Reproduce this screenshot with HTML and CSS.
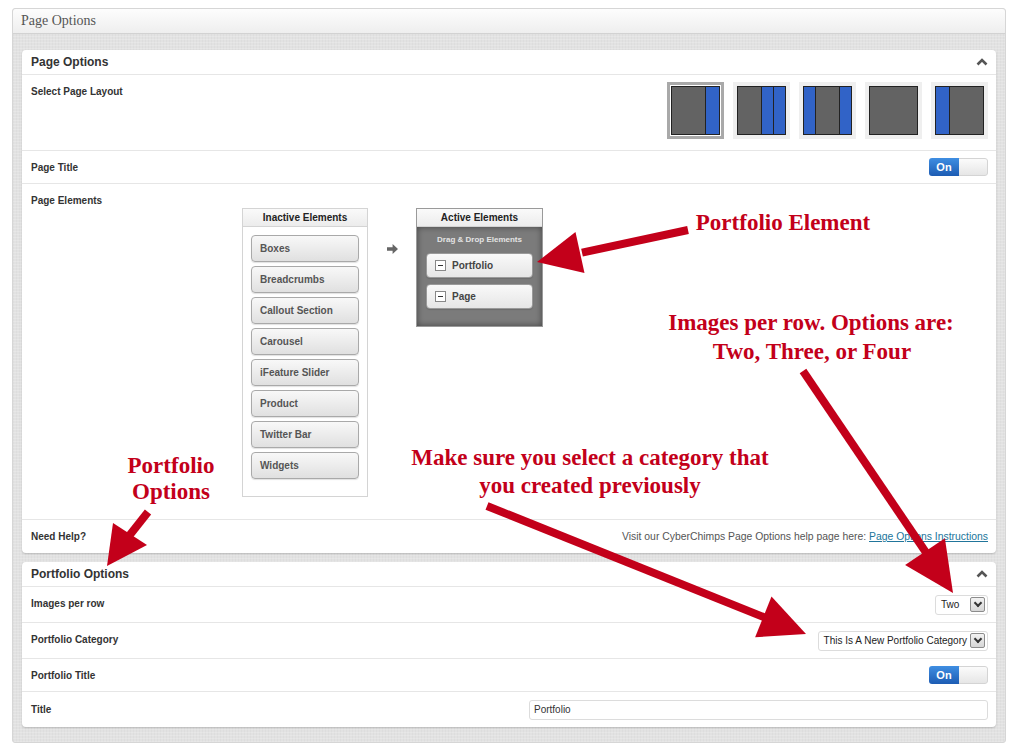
FILE: index.html
```html
<!DOCTYPE html>
<html lang="en">
<head>
    <meta charset="UTF-8">
    <title>Page Options</title>
    <meta name="viewport" content="width=device-width, initial-scale=1.0">
    <link rel="stylesheet" href="styles.css">
</head>
<body>

<div class="metabox">
    <div class="metabox-title">Page Options</div>
    <div class="metabox-inside">

        <!-- page options -->
        <div class="panel">
            <div class="panel-head">
                <h3>Page Options</h3>
                <svg class="caret" width="12" height="8" viewBox="0 0 12 8"><polyline points="1.5,6.5 6,2 10.5,6.5"/></svg>
            </div>

            <div class="opt opt-layout">
                <span class="label">Select Page Layout</span>
                <div class="layouts">
                    <div class="thumb selected"><div class="screen"><div class="main"></div><div class="side right"></div></div></div>
                    <div class="thumb"><div class="screen"><div class="main"></div><div class="side narrow right"></div><div class="side narrow right"></div></div></div>
                    <div class="thumb"><div class="screen"><div class="side narrow left"></div><div class="main"></div><div class="side narrow right"></div></div></div>
                    <div class="thumb"><div class="screen"><div class="main"></div></div></div>
                    <div class="thumb"><div class="screen"><div class="side left"></div><div class="main"></div></div></div>
                </div>
            </div>

            <div class="opt">
                <span class="label">Page Title</span>
                <span class="toggle"><span class="on">On</span><span class="off"></span></span>
            </div>

            <div class="opt opt-elements">
                <span class="label">Page Elements</span>
                <div class="dnd">
                    <div class="dnd-box">
                        <div class="dnd-head">Inactive Elements</div>
                        <ul class="dnd-list">
                            <li>Boxes</li>
                            <li>Breadcrumbs</li>
                            <li>Callout Section</li>
                            <li>Carousel</li>
                            <li>iFeature Slider</li>
                            <li>Product</li>
                            <li>Twitter Bar</li>
                            <li>Widgets</li>
                        </ul>
                    </div>
                    <svg class="dnd-arrow" width="11" height="10" viewBox="0 0 11 10"><path d="M0 3.3h5.6V0L11 5 5.6 10V6.7H0z"/></svg>
                    <div class="dnd-box dnd-active">
                        <div class="dnd-head">Active Elements</div>
                        <div class="dnd-drop">
                            <p>Drag &amp; Drop Elements</p>
                            <ul class="dnd-list">
                                <li><span class="minus"></span>Portfolio</li>
                                <li><span class="minus"></span>Page</li>
                            </ul>
                        </div>
                    </div>
                </div>
            </div>

            <div class="opt">
                <span class="label">Need Help?</span>
                <span class="help">Visit our CyberChimps Page Options help page here: <a href="#">Page Options Instructions</a></span>
            </div>
        </div>

        <!-- portfolio options -->
        <div class="panel">
            <div class="panel-head">
                <h3>Portfolio Options</h3>
                <svg class="caret" width="12" height="8" viewBox="0 0 12 8"><polyline points="1.5,6.5 6,2 10.5,6.5"/></svg>
            </div>

            <div class="opt opt-tall">
                <span class="label">Images per row</span>
                <span class="select select-sm"><span class="value">Two</span><span class="drop"></span></span>
            </div>

            <div class="opt opt-tall">
                <span class="label">Portfolio Category</span>
                <span class="select"><span class="value">This Is A New Portfolio Category</span><span class="drop"></span></span>
            </div>

            <div class="opt">
                <span class="label">Portfolio Title</span>
                <span class="toggle"><span class="on">On</span><span class="off"></span></span>
            </div>

            <div class="opt opt-title">
                <span class="label">Title</span>
                <input type="text" class="text-input" value="Portfolio">
            </div>
        </div>

    </div>
</div>

<!-- red callouts drawn over the form -->
<svg class="notes" width="1024" height="754" viewBox="0 0 1024 754">
    <g class="note-text">
        <text x="783" y="230">Portfolio Element</text>
        <text x="811" y="330">Images per row. Options are:</text>
        <text x="812" y="359">Two, Three, or Four</text>
        <text x="590" y="465">Make sure you select a category that</text>
        <text x="590" y="493">you created previously</text>
        <text x="171" y="473">Portfolio</text>
        <text x="171" y="499">Options</text>
    </g>
    <g class="note-arrows">
        <line x1="688" y1="230" x2="582" y2="252.6"/>
        <polygon points="537,262 575.5,232.1 584.5,273.1"/>

        <line x1="803" y1="371" x2="927" y2="554"/>
        <polygon points="953,593 905.1,565 944.9,538.2"/>

        <line x1="487" y1="506" x2="765" y2="617.6"/>
        <polygon points="806,634 755.1,637.3 771.5,596.5"/>

        <line x1="148" y1="512" x2="129" y2="536"/>
        <polygon points="107,566 113,523 147,545"/>
    </g>
</svg>

</body>
</html>
```

FILE: styles.css
```css
body {
    margin: 0;
    font-family: "Liberation Sans", Arial, sans-serif;
    color: #333;
    background: #fff;
}

ul {
    margin: 0;
    padding: 0;
    list-style: none;
}

/* outer metabox */
.metabox {
    box-sizing: border-box;
    width: 994px;
    margin: 8px 0 0 12px;
    border: 1px solid #d6d6d6;
    border-radius: 3px;
    background-color: #e2e2e2;
    background-image:
        repeating-linear-gradient(0deg, rgba(255, 255, 255, 0.18) 0 1px, transparent 1px 3px),
        repeating-linear-gradient(90deg, rgba(0, 0, 0, 0.025) 0 1px, transparent 1px 3px);
}

.metabox-title {
    height: 24px;
    line-height: 24px;
    padding-left: 8px;
    font-family: "Liberation Serif", "Times New Roman", serif;
    font-size: 14px;
    color: #555;
    background: linear-gradient(#fdfdfd, #eeeeee);
    border-bottom: 1px solid #d2d2d2;
    border-radius: 3px 3px 0 0;
}

.metabox-inside {
    padding: 16px 9px 15px;
}

.panel {
    background: #fff;
    border-radius: 4px;
    box-shadow: 0 1px 2px rgba(0, 0, 0, 0.18);
}

.panel + .panel {
    margin-top: 9px;
}

.panel-head {
    display: flex;
    align-items: center;
    justify-content: space-between;
    height: 24px;
    padding: 0 8px 0 9px;
    border-bottom: 1px solid #e6e6e6;
}

.panel-head h3 {
    margin: 0;
    font-size: 12px;
    font-weight: bold;
    color: #333;
}

.caret {
    fill: none;
    stroke: #555;
    stroke-width: 2.6;
}

/* option rows */
.opt {
    display: flex;
    align-items: center;
    justify-content: space-between;
    min-height: 32px;
    padding: 0 8px 0 9px;
    border-bottom: 1px solid #e6e6e6;
}

.opt:last-child {
    border-bottom: none;
    min-height: 33px;
}

.opt-tall {
    min-height: 35px;
}

.opt-tall .label {
    margin-bottom: 3px;
}

.panel .opt-title {
    min-height: 35px;
}

.label {
    font-size: 10px;
    font-weight: bold;
    line-height: 13px;
    color: #333;
}

.opt-layout {
    align-items: flex-start;
    padding-top: 10px;
    padding-bottom: 11px;
}

/* layout thumbnails */
.layouts {
    display: flex;
    gap: 9px;
    margin-top: -3px;
}

.thumb {
    width: 49px;
    height: 49px;
    padding: 4px;
    background: #efefef;
}

.thumb.selected {
    padding: 1px;
    border: 3px solid #a9a9a9;
    background: #fff;
}

.screen {
    display: flex;
    height: 47px;
    border: 1px solid #222;
    background: #636363;
}

.screen .main {
    flex: 1;
}

.screen .side {
    width: 13px;
    background: #3163c7;
}

.screen .side.narrow {
    width: 11px;
}

.screen .side.right {
    border-left: 1px solid #222;
}

.screen .side.left {
    border-right: 1px solid #222;
}

/* on/off switch */
.toggle {
    display: flex;
    width: 59px;
    height: 18px;
    border-radius: 3px;
    overflow: hidden;
}

.toggle .on {
    width: 30px;
    line-height: 18px;
    text-align: center;
    font-size: 11px;
    font-weight: bold;
    color: #fff;
    background: linear-gradient(#3f8ee2, #1d5cb3);
}

.toggle .off {
    flex: 1;
    box-sizing: border-box;
    border: 1px solid #d4d4d4;
    border-left: none;
    border-radius: 0 3px 3px 0;
    background: linear-gradient(#fbfbfb, #e6e6e6);
}

/* page elements */
.opt-elements {
    display: block;
    padding-top: 10px;
    padding-bottom: 22px;
}

.opt-elements .label {
    display: block;
}

.dnd {
    display: flex;
    align-items: flex-start;
    margin: 1px 0 0 211px;
}

.dnd-box {
    box-sizing: border-box;
    width: 126px;
    border: 1px solid #d4d4d4;
    background: #fff;
}

.dnd-head {
    height: 17px;
    line-height: 17px;
    text-align: center;
    font-size: 10px;
    font-weight: bold;
    color: #222;
    background: linear-gradient(#fafafa, #ececec);
    border-bottom: 1px solid #d4d4d4;
}

.dnd-box > .dnd-list {
    padding: 8px 8px 17px;
}

.dnd-list li {
    height: 25px;
    line-height: 25px;
    padding-left: 8px;
    margin-bottom: 4px;
    font-size: 10px;
    font-weight: bold;
    color: #555;
    border: 1px solid #a9a9a9;
    border-radius: 4px;
    background: linear-gradient(#f8f8f8, #e0e0e0);
    box-shadow: 0 1px 1px rgba(0, 0, 0, 0.12);
}

.dnd-list li:last-child {
    margin-bottom: 0;
}

.dnd-arrow {
    margin: 36px 18px 0 19px;
    fill: #666;
}

.dnd-active {
    width: 127px;
    border-color: #9a9a9a;
}

.dnd-drop {
    padding: 8px 9px 17px;
    background: #7b7b7b;
    box-shadow: inset 0 0 6px rgba(0, 0, 0, 0.45);
}

.dnd-drop p {
    margin: 0 0 8px;
    line-height: 10px;
    text-align: center;
    font-size: 8px;
    font-weight: bold;
    color: #e4e4e4;
}

.dnd-drop .dnd-list li {
    display: flex;
    align-items: center;
    height: 23px;
    line-height: 23px;
    margin-bottom: 6px;
    color: #444;
    border-color: #9a9a9a;
    background: linear-gradient(#f9f9f9, #e6e6e6);
}

.dnd-drop .dnd-list li:last-child {
    margin-bottom: 0;
}

.minus {
    position: relative;
    box-sizing: border-box;
    width: 11px;
    height: 11px;
    margin-right: 6px;
    border: 1px solid #888;
    background: #fff;
}

.minus::after {
    content: "";
    position: absolute;
    left: 2px;
    right: 2px;
    top: 4px;
    height: 1px;
    background: #333;
}

/* help line */
.help {
    font-size: 10.4px;
    color: #555;
}

.help a {
    color: #21759b;
}

/* selects and inputs */
.select {
    display: flex;
    align-items: center;
    box-sizing: border-box;
    height: 20px;
    padding: 0 2px 0 5px;
    border: 1px solid #dcdcdc;
    border-radius: 3px;
    background: #fff;
    font-size: 10px;
    color: #222;
}

.select-sm {
    width: 53px;
}

.select .value {
    flex: 1;
    margin-right: 3px;
}

.select .drop {
    position: relative;
    box-sizing: border-box;
    width: 15px;
    height: 15px;
    border: 1px solid #8c8c8c;
    border-radius: 2px;
    background: linear-gradient(#f2f2f2, #d6d6d6);
}

.select .drop::after {
    content: "";
    position: absolute;
    left: 4px;
    top: 2px;
    width: 4px;
    height: 4px;
    border-right: 2px solid #333;
    border-bottom: 2px solid #333;
    transform: rotate(45deg);
}

.text-input {
    box-sizing: border-box;
    width: 459px;
    height: 20px;
    padding: 0 4px;
    border: 1px solid #dcdcdc;
    border-radius: 3px;
    font-family: "Liberation Sans", Arial, sans-serif;
    font-size: 10px;
    color: #333;
}

/* red callouts */
.notes {
    position: absolute;
    top: 0;
    left: 0;
    pointer-events: none;
}

.note-text text {
    font-family: "Liberation Serif", "Times New Roman", serif;
    font-size: 23px;
    font-weight: bold;
    fill: #c3001a;
    text-anchor: middle;
}

.note-arrows line {
    stroke: #c3001a;
    stroke-width: 8;
}

.note-arrows polygon {
    fill: #c3001a;
}
```
